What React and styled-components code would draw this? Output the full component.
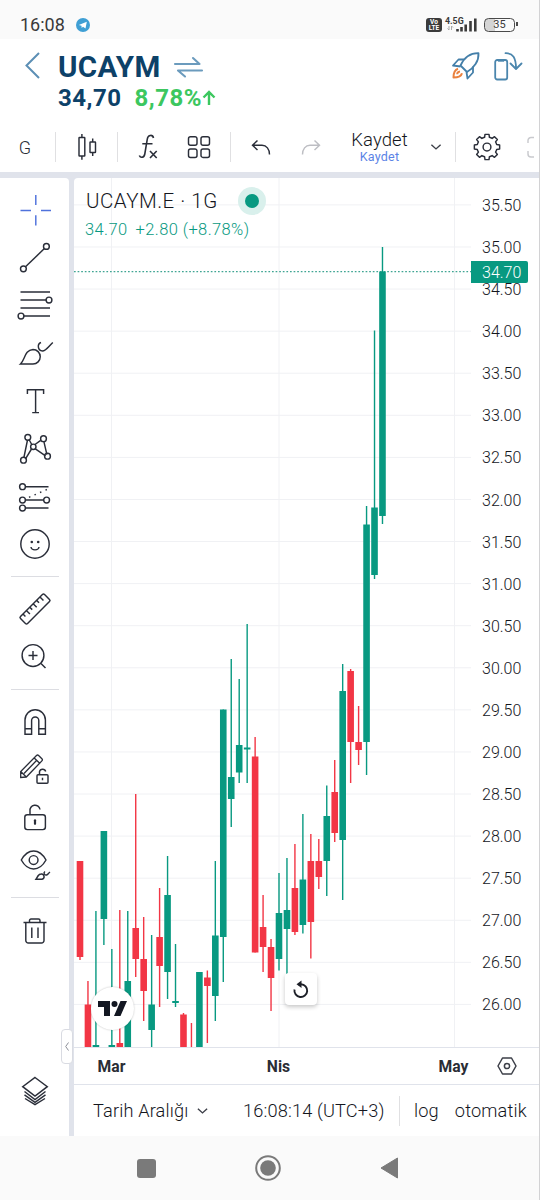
import React from 'react'
import styled, { createGlobalStyle } from 'styled-components'

const GlobalStyle = createGlobalStyle`
  * {
    box-sizing: border-box;
  }

  body {
    margin: 0;
    background: #fff;
    font-family: Roboto, sans-serif;
    color: #3c3f48;
  }

  svg {
    display: block;
    overflow: visible;
  }
`

const Screen = styled.div`
  width: 540px;
  height: 1200px;
  display: flex;
  flex-direction: column;
  overflow: hidden;
  background: #fff;
  border-right: 1px solid #d2d2d4;
`

// *---- Status bar ----*
const StatusBar = styled.div`
  height: 39px;
  flex: none;
  display: flex;
  align-items: center;
  gap: 11px;
  padding: 10px 24px 0 20px;
  background: #fafafa;
  font-size: 18px;
  color: #3a3a3a;
`

const StatusIcons = styled.div`
  display: flex;
  align-items: center;
  gap: 3px;
  margin-left: auto;
`

const Volte = styled.div`
  width: 16px;
  height: 14px;
  border-radius: 3px;
  background: #3b3b3b;
  color: #fff;
  font-size: 6.5px;
  line-height: 6px;
  font-weight: 700;
  padding-top: 1px;
  text-align: center;
`

const Battery = styled.div`
  position: relative;
  width: 31px;
  height: 14px;
  margin-left: 3px;
  border: 1.5px solid #4a4a4a;
  border-radius: 4.5px;
  background: linear-gradient(90deg, #d4d4d4 35%, #fafafa 35%);
  font-size: 11px;
  line-height: 12px;
  text-align: center;

  &::after {
    content: '';
    position: absolute;
    right: -4px;
    top: 3.5px;
    width: 2px;
    height: 4px;
    background: #4a4a4a;
  }
`

// *---- Header ----*
const Header = styled.div`
  height: 83px;
  flex: none;
  display: flex;
  align-items: flex-start;
  padding: 13px 16px 0 25px;
`

const Quote = styled.div`
  margin-left: 18px;
  color: #0d4168;
`

const Symbol = styled.div`
  display: flex;
  align-items: center;
  gap: 13px;
  height: 30px;
  font-size: 29.5px;
  font-weight: 700;
  letter-spacing: 0.4px;
`

const Price = styled.div`
  display: flex;
  align-items: center;
  height: 32px;
  font-size: 24px;
  font-weight: 700;
  letter-spacing: 0.5px;
`

const Change = styled.span`
  display: flex;
  align-items: center;
  margin-left: 13px;
  color: #3cc75f;
`

const HeaderActions = styled.div`
  display: flex;
  gap: 14px;
  margin-left: auto;
`

// *---- Toolbar ----*
const Toolbar = styled.div`
  height: 50px;
  flex: none;
  display: flex;
  align-items: center;
  overflow: hidden;
`

const ToolButton = styled.div`
  width: ${({ $w }) => $w}px;
  flex: none;
  display: flex;
  align-items: center;
  justify-content: center;
  font-size: 18px;
  font-weight: 300;
  color: #2a2e39;
`

const VLine = styled.div`
  width: 1px;
  height: 30px;
  flex: none;
  background: #e0e0e2;
`

const Save = styled.div`
  width: 96px;
  flex: none;
  display: flex;
  flex-direction: column;
  align-items: center;
  padding-left: 1px;
  font-size: 18.5px;
  line-height: 20px;
  font-weight: 300;
  letter-spacing: 0.1px;
  color: #14161d;

  small {
    font-size: 12.5px;
    line-height: 14px;
    font-weight: 400;
    letter-spacing: 0.2px;
    color: #5b83e6;
  }
`

// *---- Body ----*
const Body = styled.div`
  height: 964px;
  flex: none;
  display: flex;
  padding-top: 6px;
  background: #e0e3eb;
`

const Sidebar = styled.div`
  position: relative;
  width: 69px;
  height: 958px;
  flex: none;
  display: flex;
  flex-direction: column;
  align-items: center;
  padding-top: 8px;
  background: #fff;
  border-top-right-radius: 4px;
`

const Slot = styled.div`
  height: 47.8px;
  flex: none;
  display: flex;
  align-items: center;
  justify-content: center;
`

const Separator = styled.div`
  width: 48px;
  height: 1px;
  flex: none;
  margin: 8px 0;
  background: #dcdde2;
`

const SidebarBottom = styled(Slot)`
  margin-top: auto;
  margin-bottom: 21px;
`

const Collapse = styled.div`
  position: absolute;
  left: 61px;
  top: 851px;
  width: 12px;
  height: 35px;
  display: flex;
  align-items: center;
  justify-content: center;
  background: #fff;
  border: 1px solid #d9dbe2;
  border-radius: 4px;
`

const Main = styled.div`
  flex: 1;
  margin-left: 5px;
  display: flex;
  flex-direction: column;
  background: #fff;
  border-top-left-radius: 4px;
`

const ChartRow = styled.div`
  height: 870px;
  flex: none;
  display: flex;
  border-bottom: 1.5px solid #e0e3eb;
`

const Plot = styled.div`
  position: relative;
  width: 397px;
  flex: none;
`

const Legend = styled.div`
  position: absolute;
  left: 12px;
  top: 9px;
`

const LegendTitle = styled.div`
  display: flex;
  align-items: center;
  gap: 27px;
  height: 28px;
  font-size: 20.5px;
  font-weight: 300;
  letter-spacing: 0.5px;
  color: #14161d;
`

const Pulse = styled.div`
  width: 14px;
  height: 14px;
  border-radius: 50%;
  background: #089981;
  box-shadow: 0 0 0 7px #d9f0ec;
`

const LegendValues = styled.div`
  display: flex;
  gap: 8px;
  height: 28px;
  line-height: 29px;
  margin-left: -1px;
  font-size: 16.5px;
  font-weight: 300;
  letter-spacing: 0.4px;
  color: #089981;
`

const Logo = styled.div`
  position: absolute;
  left: 17px;
  top: 809px;
  width: 43px;
  height: 43px;
  display: flex;
  align-items: center;
  justify-content: center;
  border-radius: 50%;
  background: #fff;
  box-shadow: 0 0 2px rgba(0, 0, 0, 0.25);
`

const Reset = styled.div`
  position: absolute;
  left: 211px;
  top: 795px;
  width: 32px;
  height: 32px;
  display: flex;
  align-items: center;
  justify-content: center;
  border-radius: 4px;
  background: #fff;
  box-shadow: 0 2px 4px rgba(0, 0, 0, 0.22);
`

const Scale = styled.div`
  position: relative;
  flex: 1;
  padding-top: 7px;
`

const ScaleLabel = styled.div`
  height: 42.08px;
  line-height: 42.08px;
  padding-left: 11px;
  font-size: 16px;
  font-weight: 300;
  color: #14161d;
`

const LastPrice = styled.div`
  position: absolute;
  left: 0;
  top: 83px;
  width: 57px;
  height: 22px;
  line-height: 23px;
  padding-left: 11px;
  border-radius: 0 2px 2px 0;
  background: #089981;
  color: #fff;
  font-size: 16px;
  font-weight: 300;
`

const TimeAxis = styled.div`
  height: 37px;
  flex: none;
  display: flex;
  align-items: center;
  border-bottom: 1.5px solid #e0e3eb;
`

const Month = styled.div`
  width: ${({ $w }) => $w}px;
  flex: none;
  text-align: center;
  font-size: 15.7px;
  font-weight: 700;
  color: #2a2d35;
`

const Footer = styled.div`
  flex: 1;
  display: flex;
  align-items: center;
  font-size: 18.2px;
  font-weight: 300;
  letter-spacing: 0.15px;
  color: #14161d;
  white-space: nowrap;
`

const Range = styled.div`
  display: flex;
  align-items: center;
  gap: 9px;
  width: 169px;
  padding-left: 19px;
`

const Clock = styled.div`
  width: 156px;
`

const Mode = styled.div`
  margin-left: ${({ $gap }) => $gap}px;
`

const NavBar = styled.div`
  height: 64px;
  flex: none;
  display: flex;
  align-items: center;
  justify-content: center;
  gap: 99px;
  padding-right: 4px;
  background: #fafafa;
`

// Every icon is drawn around its own centre
const Icon = ({ size = 40, color = '#2a2e39', width = 1.45, children }) => (
  <svg
    width={size}
    height={size}
    viewBox={`${-size / 2} ${-size / 2} ${size} ${size}`}
    fill="none"
    stroke={color}
    strokeWidth={width}
  >
    {children}
  </svg>
)

const CrossIcon = () => (
  <Icon color="#4f72dc">
    <path d="M-14.5 .5H-4M6 .5H16M.8-15V-5M.8 5.3V15.5" />
  </Icon>
)

const TrendIcon = () => (
  <Icon>
    <path d="M-9.5 8.7 9.4-9.4" />
    <circle cx="-11.6" cy="10.8" r="2.9" />
    <circle cx="11.4" cy="-11.6" r="2.9" />
  </Icon>
)

const FibIcon = () => (
  <Icon>
    <path d="M-14.5-13H15M-14.5-5H11M-14.5 3H15M-11 11H15" />
    <circle cx="14" cy="-5" r="2.9" />
    <circle cx="-14" cy="11" r="2.9" />
  </Icon>
)

const BrushIcon = () => (
  <Icon>
    <path d="M-14.5 11C-10 7-10.5-3-2-3.5A7.2 7.2 0 0 1-2 11Z" />
    <path d="M6-10.5C2-9 2.5-2.5 7.5-2 11-2 13-6 17.8-10.5" />
  </Icon>
)

const TextIcon = () => (
  <Icon>
    <path d="M-7.6-7V-11.3H8.6V-7M.6-11.3V11.6M-2.8 11.6H4" />
  </Icon>
)

const PatternIcon = () => (
  <Icon>
    <path d="M-7.5-9-11.2 9M-6-9.5-3-4M5.7-8.7 0-4.5M8.9-7.4 11.9 5.7M-9.5 9.8-3.5 0M0-.4 10.5 6.8" />
    <circle cx="-7.2" cy="-11.7" r="2.9" />
    <circle cx="8.5" cy="-10.3" r="2.9" />
    <circle cx="-1.7" cy="-2.2" r="2.7" />
    <circle cx="-11.5" cy="11.2" r="2.9" />
    <circle cx="12.5" cy="7.2" r="2.9" />
  </Icon>
)

const ForecastIcon = () => (
  <Icon>
    <path d="M-9.5-10.3H13.5M-9.5 3H9M-9.5 11H13.5" />
    <path d="M-6 .3 12.5-7.8" strokeDasharray="1.5 4.5" />
    <circle cx="-12.5" cy="-10.3" r="2.9" />
    <circle cx="-12.5" cy="3" r="2.9" />
    <circle cx="11.6" cy="3" r="2.9" />
    <circle cx="-12.5" cy="11" r="2.9" />
  </Icon>
)

const SmileIcon = () => (
  <Icon>
    <circle cx="0" cy="0" r="14.2" />
    <path d="M-4 3C-3.5 6.8 3.5 6.8 4 3" />
    <circle cx="-3.2" cy="-2" r="1.3" fill="#2a2e39" stroke="none" />
    <circle cx="3.2" cy="-2" r="1.3" fill="#2a2e39" stroke="none" />
  </Icon>
)

const RulerIcon = () => (
  <Icon>
    <g transform="rotate(-45)">
      <rect x="-17" y="-5" width="34" height="10" rx="1.5" />
      <path d="M-12-5V-1.5M-7.2-5V0M-2.4-5V-1.5M2.4-5V0M7.2-5V-1.5M12-5V0" />
    </g>
  </Icon>
)

const ZoomIcon = () => (
  <Icon>
    <circle cx="-2" cy="-1.5" r="10.9" />
    <path d="M-6.5-1.5H2.5M-2-6V3M6 6.5 10.5 11" />
  </Icon>
)

const MagnetIcon = () => (
  <Icon>
    <path d="M-10 12.3V-2A10.2 10.2 0 0 1 10.4-2V12.3H3.8V-1.5A3.6 3.6 0 0 0-3.4-1.5V12.3Z" />
    <path d="M-10 6.8H-3.4M3.8 6.8H10.4" />
  </Icon>
)

const PencilLockIcon = () => (
  <Icon>
    <path
      d="M-14.300 12.500V6.500L1.500-9.500A1.500 1.500 0 0 1 3.600-9.500L6.900-6.200A1.500 1.500 0 0 1 6.900-4.100L-8.700 12ZM-14.300 6.500-8.700 12M-.800-7 4.700-1.700M-11 8.500 2-5M-11-0"
      strokeWidth="1.300"
      transform="translate(0 -5)"
    />
    <rect x="2" y="4.7" width="11" height="8.6" rx="1" fill="#fff" />
    <path d="M4.5 4.5V1.7A3.2 3.2 0 0 1 10.7 1.5M7.5 7.8V10.3" />
  </Icon>
)

const LockIcon = () => (
  <Icon>
    <rect x="-10.2" y="-2.2" width="20.6" height="14.8" rx="2.5" />
    <path d="M-5-2.5V-6A5 5 0 0 1 5-7.5" />
    <path d="M0 3.3V6.8" strokeWidth="2.2" strokeLinecap="round" />
  </Icon>
)

const EyeIcon = () => (
  <Icon>
    <path d="M-13.7-5C-7-17 4.3-17 11-5 4.3 7-7 7-13.7-5Z" />
    <circle cx="-1.4" cy="-5" r="4.4" />
    <path d="M1 14.3C2.5 12.3 3 9 6 9A2.7 2.7 0 0 1 7 14.3Z" />
    <path d="M10 6.5C8 8 9.5 10.5 11.5 10 13 9.5 13.5 8 15 7" />
  </Icon>
)

const TrashIcon = () => (
  <Icon>
    <path d="M-11.5-7.5H11.5M-5.5-7.5V-9.5A1.5 1.5 0 0 1-4-11H3.5A1.5 1.5 0 0 1 5-9.5V-7.5" />
    <path d="M-9.2-7.5V10.5A2.5 2.5 0 0 0-6.7 13H6.5A2.5 2.5 0 0 0 9 10.5V-7.5M-3.2-2.5V8M3-2.5V8" />
  </Icon>
)

const LayersIcon = () => (
  <Icon>
    <path d="M0-13.5 12.3-4.3 0 5-12.3-4.3Z" />
    <path d="M-10.5.5 0 8.5 10.5.5M-10.5 3.8 0 11.4 10.5 3.8M-10 7.5 0 13.7 10 7.5" />
  </Icon>
)

const Telegram = () => (
  <svg width="14" height="14" viewBox="0 0 14 14">
    <circle cx="7" cy="7" r="7" fill="#3f9fd4" />
    <path d="M2.8 7 10.8 3.7 9.5 10.5 7 8.7 5.7 10 5.5 7.8Z" fill="#fff" />
  </svg>
)

const Signal = () => (
  <svg width="33" height="16" viewBox="0 0 33 16">
    <text x="0" y="6.8" fontSize="8.8" fontWeight="700" fill="#3b3b3b">4.5G</text>
    <path d="M4 9V13M2.5 11.5 4 13M6.5 13V9M8 10.5 6.5 9" stroke="#aaa" fill="none" />
    <path d="M12.5 14.5V12M16.5 14.5V10M20.7 14.5V7.5M25.5 14.5V4M30.3 14.5V1.5" stroke="#3b3b3b" strokeWidth="2.6" />
  </svg>
)

const Chevron = ({ w = 10 }) => (
  <svg width={w} height="6" viewBox="0 0 10 6" fill="none" stroke="#3c3f48" strokeWidth="1.4">
    <path d="M.4.7 5 4.9 9.6.7" />
  </svg>
)

const SwapIcon = () => (
  <svg width="29" height="24" viewBox="0 0 29 24" fill="none" stroke="#6b9bbd" strokeWidth="2.1" strokeLinecap="round" strokeLinejoin="round">
    <path d="M1 9H25.5L19 3M28 15.5H4L11 21.5" />
  </svg>
)

const RocketIcon = () => (
  <svg width="28" height="28" viewBox="0 0 28 28" fill="none" stroke="#447fa9" strokeWidth="1.8" strokeLinejoin="round">
    <path d="M8.5 13.5C12 6 18 1 26.5 1.2 27 9 22 16 15 20Z" />
    <path d="M12 7.5H6.5L1 13.5 8.5 14.5M21 14.5V20.5L15.5 26.5 14.5 20" />
    <path d="M6 16.7C2 18 1.5 21.5 1.5 25.5 5.5 25.5 9 25 10 21.2M8 19.5C6 19.7 5.2 21 5.2 22.3" stroke="#e9813f" strokeWidth="2" />
  </svg>
)

const RotateIcon = () => (
  <svg width="29" height="29" viewBox="0 0 29 29" fill="none" stroke="#4b86ad" strokeWidth="1.8" strokeLinecap="round" strokeLinejoin="round">
    <rect x="1.2" y="8" width="12" height="19.5" rx="2" />
    <path d="M4.5 8.3H10V9.2H4.5Z" strokeWidth="1" />
    <path d="M11.5 1.2C19 1 22 6 22 16.5M16.5 11.5 22 17 27.5 11.5" />
  </svg>
)

const CandlesIcon = () => (
  <Icon size={28}>
    <rect x="-8" y="-9.5" width="5.8" height="18.5" rx=".5" />
    <rect x="3" y="-5" width="5.5" height="10.5" rx=".5" />
    <path d="M-5.1-13V-9.5M-5.1 9V12.7M5.7-8.5V-5M5.7 5.5V9" />
  </Icon>
)

const FxIcon = () => (
  <Icon size={28} width={1.6}>
    <path d="M5.5-9C4.8-12.5 0-12.7-.7-8L-3.2 7C-3.9 11-7.5 11.2-8.7 8.5M-5.7-3.3H4.5" />
    <path d="M2 4 8.7 11M8.7 4 2 11" />
  </Icon>
)

const GridIcon = () => (
  <Icon size={28}>
    <rect x="-10.5" y="-10.3" width="8.5" height="8.5" rx="2" />
    <rect x="2" y="-10.3" width="8.5" height="8.5" rx="2" />
    <rect x="-10.5" y="1.9" width="8.5" height="8.5" rx="2" />
    <rect x="2" y="1.9" width="8.5" height="8.5" rx="2" />
  </Icon>
)

const UndoIcon = () => (
  <Icon size={24}>
    <path d="M-3.5-6.5-8.5-1.7-3.5 3M-8.5-1.7H1C5.5-1.7 8.5 2 8.5 7.5" />
  </Icon>
)

const RedoIcon = () => (
  <Icon size={24} color="#bdbec3">
    <path d="M3.5-6.5 8.5-1.7 3.5 3M8.5-1.7H-1C-5.5-1.7-8.5 2-8.5 7.5" />
  </Icon>
)

// 8 rounded teeth
const gearPath = Array.from({ length: 8 }, (_, i) => {
  const at = (deg, r) => {
    const a = ((i * 45 + deg) * Math.PI) / 180
    return `${(Math.cos(a) * r).toFixed(2)} ${(Math.sin(a) * r).toFixed(2)}`
  }
  return `${i ? 'L' : 'M'}${at(-14, 10)}L${at(-9, 12.8)}L${at(9, 12.8)}L${at(14, 10)}A10 10 0 0 1 ${at(31, 10)}`
}).join('')

const GearIcon = () => (
  <Icon size={28}>
    <path d={`${gearPath}Z`} strokeLinejoin="round" />
    <circle cx="0" cy="0" r="3.9" />
  </Icon>
)

const UP = '#089981'
const DOWN = '#f23645'

// [colour, high, body top, body bottom, low]
const candles = [
  [DOWN, 861, 861, 957, 960],
  [DOWN, 981, 1004.5, 1047, 1047],
  [UP, 911, 1045, 1047, 1047],
  [UP, 831, 831, 919, 945],
  [UP, 949, 1045, 1047, 1047],
  [DOWN, 910, 1043, 1047, 1047],
  [UP, 911, 981, 1047, 1047],
  [DOWN, 794, 928, 959, 977],
  [DOWN, 917, 959, 991, 1021],
  [UP, 935, 1004.5, 1030, 1047],
  [DOWN, 888, 937, 966, 1007],
  [UP, 856, 895, 972, 999],
  [UP, 944, 1001, 1003, 1007],
  [DOWN, 1013, 1014.5, 1047, 1047],
  [DOWN, 1023, 1047, 1047, 1047],
  [UP, 972, 972, 1047, 1047],
  [DOWN, 970.5, 977.5, 986, 1043],
  [UP, 861, 935.5, 996, 1021],
  [UP, 709.5, 709.5, 937, 982],
  [UP, 659, 777, 799, 827],
  [UP, 679, 745, 772.5, 783],
  [UP, 624, 747.5, 749.5, 783],
  [DOWN, 737, 756.5, 952.5, 952.5],
  [DOWN, 895, 927, 947, 972],
  [DOWN, 939, 947, 978, 1011],
  [UP, 873, 913, 959, 970.5],
  [UP, 858, 910, 929, 974],
  [DOWN, 844, 888, 932, 935],
  [UP, 814, 879.5, 925, 933.5],
  [DOWN, 834, 861, 922, 958.5],
  [DOWN, 839, 861, 877, 889],
  [UP, 785.5, 816, 861, 896],
  [DOWN, 760, 792, 833, 842],
  [UP, 664, 691, 840, 900],
  [DOWN, 669, 671, 742, 783],
  [DOWN, 706, 742, 750, 765],
  [UP, 506, 524.5, 742, 775],
  [UP, 330.5, 507.5, 575, 579],
  [UP, 247, 271.5, 516, 524],
]

const prices = Array.from({ length: 20 }, (_, i) => (35.5 - i * 0.5).toFixed(2))

const Chart = () => (
  <svg width="397" height="869" viewBox="74 178 397 869">
    <g stroke="#f0f1f4">
      {prices.map((p, i) => (
        <path key={p} d={`M74 ${204.9 + i * 42.08}H471`} />
      ))}
      <path d="M111.5 178V1047M279 178V1047M454.5 178V1047" />
    </g>
    <path d="M74 271.7H471" stroke="#3fa593" strokeWidth="1.3" strokeDasharray="1.7 1.9" />
    {candles.map(([color, high, top, bottom, low], i) => {
      const x = 80 + i * 7.96
      return (
        <g key={i} fill={color}>
          <rect x={x - 0.7} y={high} width="1.4" height={low - high} />
          <rect x={x - 3.3} y={top} width="6.6" height={bottom - top} />
        </g>
      )
    })}
  </svg>
)

const groups = [
  [CrossIcon, TrendIcon, FibIcon, BrushIcon, TextIcon, PatternIcon, ForecastIcon, SmileIcon],
  [RulerIcon, ZoomIcon],
  [MagnetIcon, PencilLockIcon, LockIcon, EyeIcon],
  [TrashIcon],
]

const App = () => {
  return (
    <Screen>
      <GlobalStyle />
      <StatusBar>
        16:08
        <Telegram />
        <StatusIcons>
          <Volte>Vo<br />LTE</Volte>
          <Signal />
          <Battery>35</Battery>
        </StatusIcons>
      </StatusBar>

      <Header>
        <svg width="15" height="27" viewBox="0 0 15 27" fill="none" stroke="#5c8fb5" strokeWidth="2">
          <path d="M14 1 1.5 13.5 14 26" />
        </svg>
        <Quote>
          <Symbol>UCAYM <SwapIcon /></Symbol>
          <Price>
            34,70
            <Change>
              8,78%
              <svg width="14" height="16" viewBox="0 0 14 16" fill="none" stroke="#3cc75f" strokeWidth="2.4">
                <path d="M7 15V2M1.5 7.5 7 2 12.5 7.5" />
              </svg>
            </Change>
          </Price>
        </Quote>
        <HeaderActions>
          <RocketIcon />
          <RotateIcon />
        </HeaderActions>
      </Header>

      <Toolbar>
        <ToolButton $w={50}>G</ToolButton>
        <ToolButton $w={5} />
        <VLine />
        <ToolButton $w={61}><CandlesIcon /></ToolButton>
        <VLine />
        <ToolButton $w={60}><FxIcon /></ToolButton>
        <ToolButton $w={42}><GridIcon /></ToolButton>
        <ToolButton $w={10} />
        <VLine />
        <ToolButton $w={60}><UndoIcon /></ToolButton>
        <ToolButton $w={40}><RedoIcon /></ToolButton>
        <Save>
          Kaydet
          <small>Kaydet</small>
        </Save>
        <ToolButton $w={18}><Chevron /></ToolButton>
        <ToolButton $w={10} />
        <VLine />
        <ToolButton $w={62}><GearIcon /></ToolButton>
        <ToolButton $w={34}>
          <Icon size={20} color="#c9cace">
            <path d="M-1-9.5H-4A3 3 0 0 0-7-6.5V-4M-7 4V7A3 3 0 0 0-4 10H-1" />
          </Icon>
        </ToolButton>
      </Toolbar>

      <Body>
        <Sidebar>
          {groups.map((icons, g) => (
            <React.Fragment key={g}>
              {g > 0 && <Separator />}
              {icons.map((Tool, i) => (
                <Slot key={i}><Tool /></Slot>
              ))}
            </React.Fragment>
          ))}
          <SidebarBottom><LayersIcon /></SidebarBottom>
          <Collapse>
            <svg width="4" height="9" viewBox="0 0 4 9" fill="none" stroke="#8d9099">
              <path d="M3.5.5.7 4.5 3.5 8.5" />
            </svg>
          </Collapse>
        </Sidebar>

        <Main>
          <ChartRow>
            <Plot>
              <Chart />
              <Legend>
                <LegendTitle>UCAYM.E · 1G <Pulse /></LegendTitle>
                <LegendValues>
                  <span>34.70</span>
                  <span>+2.80 (+8.78%)</span>
                </LegendValues>
              </Legend>
              <Logo>
                <svg width="29" height="15" viewBox="0 0 29 15" fill="#131722">
                  <path d="M0 0H12V15H6V6H0ZM22.5 0H29L22.5 15H16Z" />
                  <circle cx="16.5" cy="3" r="3" />
                </svg>
              </Logo>
              <Reset>
                <svg width="16" height="18" viewBox="0 0 16 18" fill="none" stroke="#1c1f27" strokeWidth="1.9">
                  <path d="M1.5 9.5A6.4 6.4 0 1 0 8 4.2H5.5" />
                  <path d="M8.5.5V8L3.5 4.2Z" fill="#1c1f27" stroke="none" />
                </svg>
              </Reset>
            </Plot>
            <Scale>
              {prices.map((p) => <ScaleLabel key={p}>{p}</ScaleLabel>)}
              <LastPrice>34.70</LastPrice>
            </Scale>
          </ChartRow>
          <TimeAxis>
            <Month $w={75}>Mar</Month>
            <Month $w={259}>Nis</Month>
            <Month $w={91}>May</Month>
            <svg width="20" height="18" viewBox="2 0 20 18" fill="none" stroke="#3c3f48" strokeWidth="1.5">
              <path d="M5.5 1H14.5L19 9 14.5 17H5.5L1 9Z" strokeLinejoin="round" />
              <circle cx="10" cy="9" r="2.6" />
            </svg>
          </TimeAxis>
          <Footer>
            <Range>Tarih Aralığı <Chevron w={11} /></Range>
            <Clock>16:08:14 (UTC+3)</Clock>
            <VLine />
            <Mode $gap={14}>log</Mode>
            <Mode $gap={16}>otomatik</Mode>
          </Footer>
        </Main>
      </Body>

      <NavBar>
        <svg width="19" height="19"><rect width="19" height="19" rx="3" fill="#7a7a7a" /></svg>
        <svg width="26" height="26">
          <circle cx="13" cy="13" r="11.8" fill="none" stroke="#7a7a7a" strokeWidth="2" />
          <circle cx="13" cy="13" r="7.8" fill="#7a7a7a" />
        </svg>
        <svg width="19" height="22">
          <path d="M17.5 1V21L1 11Z" fill="#7a7a7a" stroke="#7a7a7a" strokeLinejoin="round" />
        </svg>
      </NavBar>
    </Screen>
  )
}

export default App
